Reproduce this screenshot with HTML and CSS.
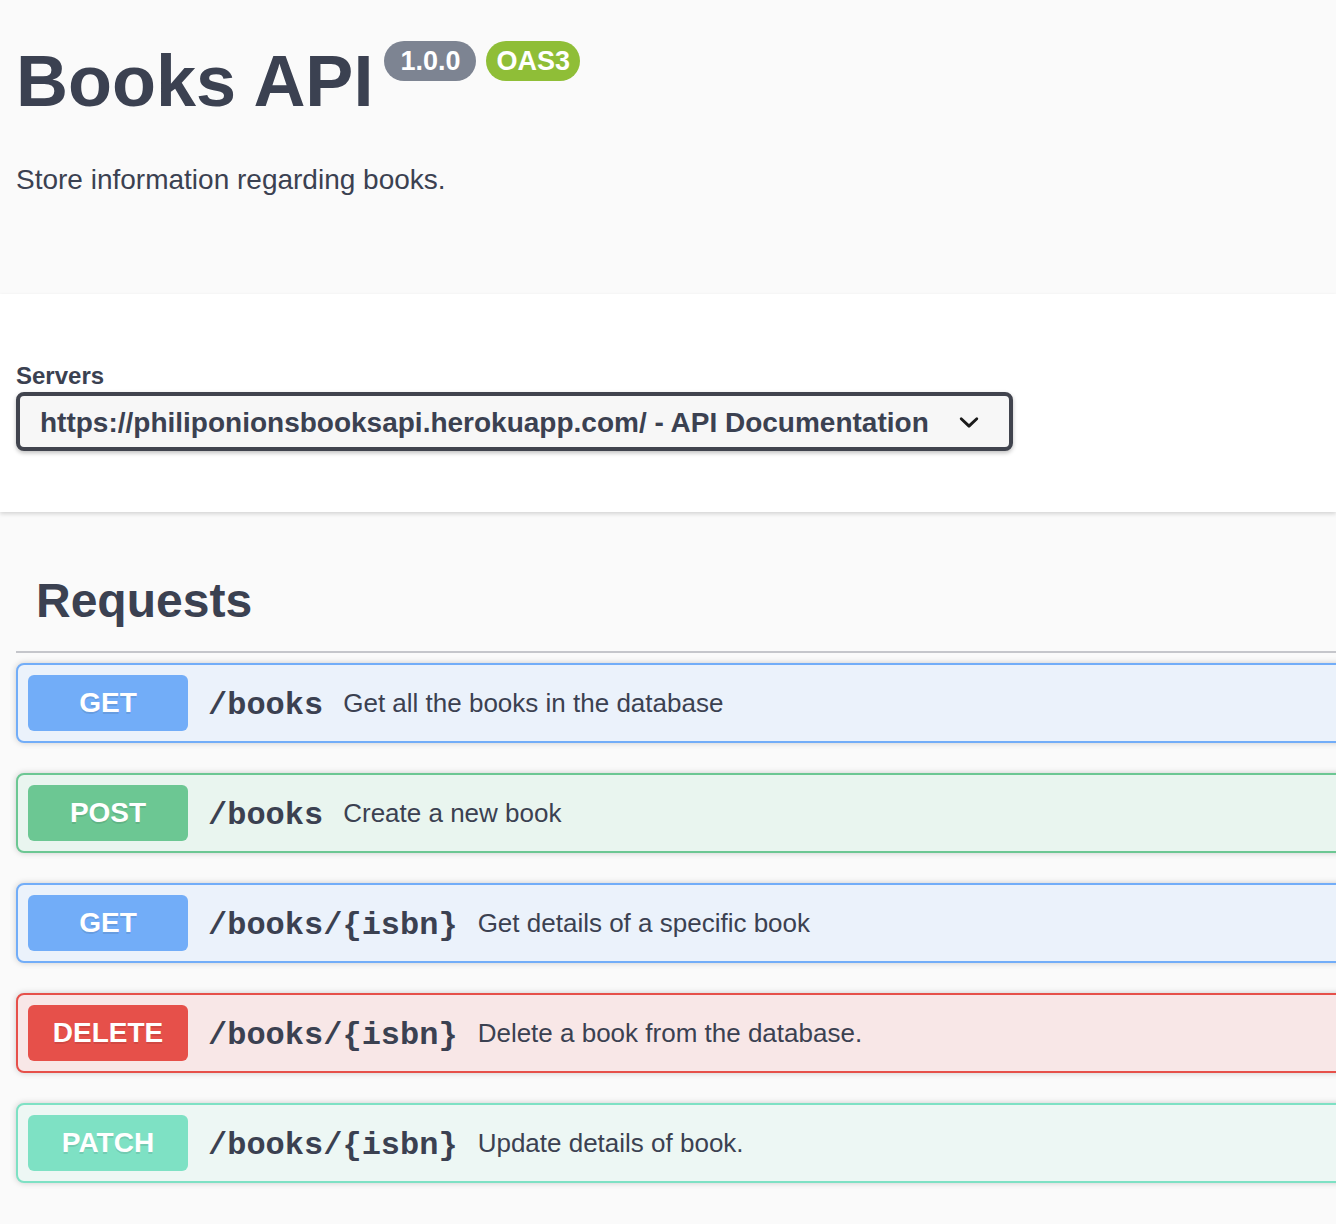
FILE: index.html
```html
<!DOCTYPE html>
<html lang="en">
<head>
<meta charset="utf-8">
<title>Books API</title>
<link rel="stylesheet" href="styles.css">
</head>
<body>
<header class="info">
  <div class="title-row">
    <h1 class="title">Books API</h1>
    <span class="badge badge-version">1.0.0</span>
    <span class="badge badge-oas">OAS3</span>
  </div>
  <p class="description">Store information regarding books.</p>
</header>

<section class="servers">
  <div class="servers-label">Servers</div>
  <div class="server-select">
    <span class="server-text">https://philiponionsbooksapi.herokuapp.com/ - API Documentation</span>
    <svg class="chevron" viewBox="0 0 20 20" width="40" height="40" aria-hidden="true"><path d="M13.418 7.859a.695.695 0 0 1 .978 0 .68.68 0 0 1 0 .969l-3.908 3.83a.697.697 0 0 1-.979 0l-3.908-3.83a.68.68 0 0 1 0-.969.695.695 0 0 1 .978 0L10 11l3.418-3.141z"/></svg>
  </div>
</section>

<section class="requests">
  <h3 class="tag">Requests</h3>
  <div class="ops">
    <div class="op op-get">
      <span class="method">GET</span>
      <span class="path">/books</span>
      <span class="summary">Get all the books in the database</span>
    </div>
    <div class="op op-post">
      <span class="method">POST</span>
      <span class="path">/books</span>
      <span class="summary">Create a new book</span>
    </div>
    <div class="op op-get">
      <span class="method">GET</span>
      <span class="path">/books/{isbn}</span>
      <span class="summary">Get details of a specific book</span>
    </div>
    <div class="op op-delete">
      <span class="method">DELETE</span>
      <span class="path">/books/{isbn}</span>
      <span class="summary">Delete a book from the database.</span>
    </div>
    <div class="op op-patch">
      <span class="method">PATCH</span>
      <span class="path">/books/{isbn}</span>
      <span class="summary">Update details of book.</span>
    </div>
  </div>
</section>
</body>
</html>
```

FILE: styles.css
```css
html, body {
  margin: 0;
  padding: 0;
  background: #fafafa;
  overflow-x: hidden;
}
body {
  font-family: "Liberation Sans", Arial, Helvetica, sans-serif;
  color: #3b4151;
}

.info {
  background: #fafafa;
  padding: 41px 16px 93px;
}
.title-row {
  display: flex;
  align-items: flex-start;
}
.title {
  margin: 4px 0 0;
  font-size: 72px;
  line-height: 72px;
  font-weight: 700;
  color: #3b4151;
}
.badge {
  display: flex;
  align-items: center;
  height: 40px;
  border-radius: 20px;
  color: #fff;
  font-weight: 700;
  font-size: 27px;
  line-height: 40px;
}
.badge-version {
  margin-left: 11px;
  padding: 0 16px;
  background: #7d8492;
}
.badge-oas {
  margin-left: 10px;
  padding: 0 10px;
  background: #8fbe37;
}
.description {
  margin: 42px 0 0;
  font-size: 28px;
  line-height: 42px;
}

.servers {
  background: #fff;
  box-shadow: 0 2px 4px 0 rgba(0, 0, 0, .15);
  padding: 68px 16px 61px;
  position: relative;
}
.servers-label {
  font-size: 24px;
  line-height: 28px;
  font-weight: 700;
  margin-bottom: 2px;
}
.server-select {
  display: inline-flex;
  align-items: center;
  box-sizing: border-box;
  height: 59px;
  padding: 0 20px 0 20px;
  gap: 20px;
  border: 4px solid #41444e;
  border-radius: 8px;
  background: #f7f7f7;
  box-shadow: 0 2px 4px 0 rgba(0, 0, 0, .25);
}
.server-text {
  font-size: 28px;
  font-weight: 700;
  white-space: nowrap;
  padding-top: 2px;
}
.chevron {
  display: block;
  fill: #1b1b1b;
}

.requests {
  padding: 39px 0 40px 16px;
  margin-right: -120px;
}
.tag {
  margin: 0 0 10px;
  padding: 20px 40px 20px 20px;
  font-size: 48px;
  line-height: 60px;
  font-weight: 700;
  border-bottom: 2px solid #c5c6cb;
}
.ops {
  display: flex;
  flex-direction: column;
  gap: 30px;
}
.op {
  display: flex;
  align-items: center;
  padding: 10px;
  border: 2px solid;
  border-radius: 8px;
  box-shadow: 0 0 6px rgba(0, 0, 0, .19);
}
.method {
  flex: none;
  width: 160px;
  height: 56px;
  line-height: 56px;
  border-radius: 6px;
  text-align: center;
  color: #fff;
  font-size: 28px;
  font-weight: 700;
  text-shadow: 0 2px 0 rgba(0, 0, 0, .1);
}
.path {
  padding: 4px 20px 0;
  font-family: "Liberation Mono", "Courier New", monospace;
  font-size: 32px;
  font-weight: 700;
  white-space: nowrap;
}
.summary {
  font-size: 26px;
  white-space: nowrap;
}

.op-get { border-color: #72adf8; background: #ebf2fb; }
.op-get .method { background: #72adf8; }
.op-post { border-color: #6cc793; background: #e9f5ef; }
.op-post .method { background: #6cc793; }
.op-delete { border-color: #e6504a; background: #f8e7e7; }
.op-delete .method { background: #e6504a; }
.op-patch { border-color: #7ee1c4; background: #edf7f4; }
.op-patch .method { background: #7ee1c4; }
```
